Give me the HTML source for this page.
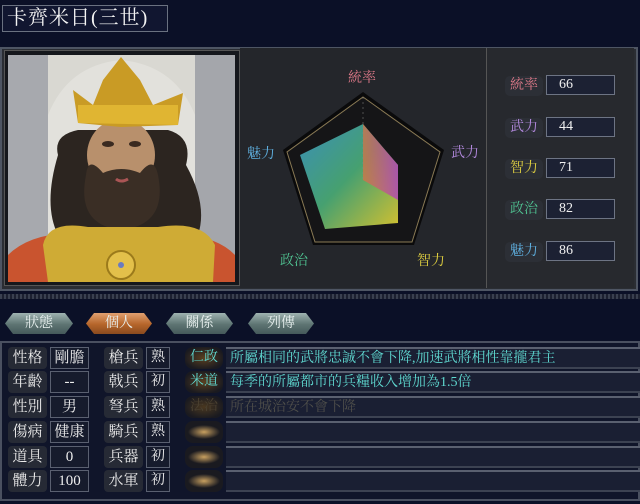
<!DOCTYPE html>
<html><head><meta charset="utf-8"><style>
*{margin:0;padding:0;box-sizing:border-box}
body{width:640px;height:504px;background:#0b1027;font-family:"Liberation Serif","Noto Serif CJK SC",serif;position:relative;overflow:hidden;color:#fff}
.abs{position:absolute}
.title{left:2px;top:5px;width:166px;height:27px;border:1px solid #6a7180;background:#111630;font-size:20px;line-height:25px;padding-left:4px;letter-spacing:1px;color:#f4f4f4}
.panel{border:2px solid #5c6270;background:#232529}
.lab{background:#2c2f36;border-radius:5px;font-size:14px;text-align:center;line-height:20px;height:20px}
.val{background:#1c2133;border:1px solid #6d7484;font-size:14px;line-height:18px;height:20px;color:#f0f0f0}
.tab{top:313px;height:21px;font-size:14px;line-height:21px;text-align:center;color:#e8f0ef;clip-path:polygon(8px 0,calc(100% - 8px) 0,100% 50%,calc(100% - 8px) 100%,8px 100%,0 50%);background:linear-gradient(#9fb3b1,#5d7472 55%,#45595a)}
.r{height:22px}
.bl{background:#262a35;border-radius:4px;font-size:15px;text-align:center;line-height:22px;color:#eaeaea}
.bv{background:#161b2c;border:1px solid #5a6070;font-size:15px;text-align:center;line-height:20px;color:#eee}
.sk{font-size:14px;text-align:center;line-height:22px;border-radius:8px}
.desc{background:#1a1f33;border-top:2px solid #5a6070;border-bottom:2px solid #3c4252;font-size:14px;line-height:19px;padding-left:4px;color:#5fd8d0}
</style></head><body>
<div class="abs title">卡齊米日(三世)</div>

<div class="abs" style="left:0;top:47px;width:638px;height:244px;background:#2a2d33;border:2px solid #4e5563"></div>
<div class="abs" style="left:4px;top:50px;width:236px;height:236px;background:#15171c;border:1px solid #555"></div>
<svg class="abs" style="left:8px;top:55px" width="227" height="227" viewBox="0 0 227 227">
<rect width="227" height="227" fill="#d9d8d2"/>
<rect x="0" y="0" width="40" height="227" fill="#a7a9ae"/>
<rect x="187" y="0" width="40" height="227" fill="#a4a6ab"/>
<path d="M40 227 V60 Q60 10 113 5 Q167 10 187 60 V227Z" fill="#e2e1dc"/>
<path d="M0 200 Q20 180 60 178 L170 178 Q210 182 227 200 V227 H0Z" fill="#c9542f"/>
<path d="M50 100 Q45 80 70 75 L160 75 Q185 82 178 110 Q200 150 190 180 L50 180 Q35 150 50 100Z" fill="#2c2520"/>
<ellipse cx="113" cy="100" rx="34" ry="36" fill="#b8906c"/>
<path d="M78 120 Q80 100 95 118 Q113 110 132 118 Q146 100 150 120 Q160 170 113 175 Q68 170 78 120Z" fill="#3a2e25"/>
<ellipse cx="100" cy="89" rx="6" ry="3" fill="#3a2a20"/><ellipse cx="127" cy="89" rx="6" ry="3" fill="#3a2a20"/>
<path d="M108 124 Q113 128 120 124" stroke="#a55" stroke-width="3" fill="none"/>
<path d="M65 35 L85 50 L95 25 L113 2 L132 25 L145 50 L175 38 L170 70 L113 72 L70 68Z" fill="#c99b25"/>
<path d="M70 50 L170 50 L170 70 L70 68Z" fill="#e0b532"/>
<path d="M35 190 Q40 165 80 172 L150 172 Q195 165 207 190 L205 227 H40Z" fill="#cfab35"/>
<circle cx="113" cy="210" r="14" fill="#e3c04a" stroke="#9b7a1b" stroke-width="2"/>
<circle cx="113" cy="210" r="3" fill="#6a7bc0"/>
</svg>

<div class="abs" style="left:240px;top:48px;width:246px;height:240px;background:#24262b"></div>
<svg class="abs" style="left:240px;top:48px" width="246" height="240" viewBox="240 48 246 240">
<defs>
<linearGradient id="g1" x1="0" y1="0" x2="1" y2="1"><stop offset="0" stop-color="#3a8fb8"/><stop offset=".5" stop-color="#46a070"/><stop offset="1" stop-color="#d2c030"/></linearGradient>
<linearGradient id="g2" x1="0" y1="0" x2="1" y2="0"><stop offset="0" stop-color="#e07040" stop-opacity=".7"/><stop offset="1" stop-color="#b040c0" stop-opacity=".8"/></linearGradient>
</defs>
<polygon points="363,92 444,150 414,245 313,245 283,150" fill="#0a0a0b"/>
<polygon points="363,97 440,152 412,242 315,242 287,152" fill="#151517" stroke="#8a7a55" stroke-width="1"/>
<polygon points="363,124 398,165 398,223 325,229 300,155" fill="url(#g1)"/>
<polygon points="363,124 398,165 398,200 363,180" fill="url(#g2)"/>
<line x1="363" y1="97" x2="363" y2="180" stroke="#888" stroke-width=".5" stroke-dasharray="2,3"/>
</svg>
<div class="abs" style="left:348px;top:67px;font-size:14px;color:#e07a8a">統率</div>
<div class="abs" style="left:451px;top:142px;font-size:14px;color:#b48ae0">武力</div>
<div class="abs" style="left:417px;top:250px;font-size:14px;color:#e0d040">智力</div>
<div class="abs" style="left:280px;top:250px;font-size:14px;color:#4fc090">政治</div>
<div class="abs" style="left:247px;top:143px;font-size:14px;color:#5fb0e0">魅力</div>

<div class="abs" style="left:486px;top:48px;width:148px;height:240px;background:#27292e;border-left:1px solid #555"></div>
<div class="abs lab" style="left:505px;top:76px;width:38px;color:#e07a8a">統率</div><div class="abs val" style="left:546px;top:75px;width:69px;padding-left:12px">66</div>
<div class="abs lab" style="left:505px;top:118px;width:38px;color:#b48ae0">武力</div><div class="abs val" style="left:546px;top:117px;width:69px;padding-left:12px">44</div>
<div class="abs lab" style="left:505px;top:159px;width:38px;color:#e0d040">智力</div><div class="abs val" style="left:546px;top:158px;width:69px;padding-left:12px">71</div>
<div class="abs lab" style="left:505px;top:200px;width:38px;color:#4fc090">政治</div><div class="abs val" style="left:546px;top:199px;width:69px;padding-left:12px">82</div>
<div class="abs lab" style="left:505px;top:242px;width:38px;color:#5fb0e0">魅力</div><div class="abs val" style="left:546px;top:241px;width:69px;padding-left:12px">86</div>

<div class="abs" style="left:0;top:294px;width:640px;height:5px;background:repeating-linear-gradient(90deg,#3a4050 0 2px,#1c2030 2px 4px)"></div>

<div class="abs tab" style="left:5px;width:68px">狀態</div>
<div class="abs tab" style="left:86px;width:66px;background:linear-gradient(#e0a070,#b5652a 55%,#8a4a1f)">個人</div>
<div class="abs tab" style="left:166px;width:67px">關係</div>
<div class="abs tab" style="left:248px;width:66px">列傳</div>

<div class="abs" style="left:0;top:341px;width:640px;height:160px;border:2px solid #4a5060;background:#10152a"></div>

<div class="abs bl r" style="left:8px;top:347px;width:39px">性格</div><div class="abs bv r" style="left:50px;top:347px;width:39px">剛膽</div>
<div class="abs bl r" style="left:8px;top:371px;width:39px">年齡</div><div class="abs bv r" style="left:50px;top:371px;width:39px">--</div>
<div class="abs bl r" style="left:8px;top:396px;width:39px">性別</div><div class="abs bv r" style="left:50px;top:396px;width:39px">男</div>
<div class="abs bl r" style="left:8px;top:421px;width:39px">傷病</div><div class="abs bv r" style="left:50px;top:421px;width:39px">健康</div>
<div class="abs bl r" style="left:8px;top:446px;width:39px">道具</div><div class="abs bv r" style="left:50px;top:446px;width:39px">0</div>
<div class="abs bl r" style="left:8px;top:470px;width:39px">體力</div><div class="abs bv r" style="left:50px;top:470px;width:39px">100</div>

<div class="abs bl r" style="left:104px;top:347px;width:39px">槍兵</div><div class="abs bv r" style="left:146px;top:347px;width:24px;font-size:14px">熟</div>
<div class="abs bl r" style="left:104px;top:371px;width:39px">戟兵</div><div class="abs bv r" style="left:146px;top:371px;width:24px;font-size:14px">初</div>
<div class="abs bl r" style="left:104px;top:396px;width:39px">弩兵</div><div class="abs bv r" style="left:146px;top:396px;width:24px;font-size:14px">熟</div>
<div class="abs bl r" style="left:104px;top:421px;width:39px">騎兵</div><div class="abs bv r" style="left:146px;top:421px;width:24px;font-size:14px">熟</div>
<div class="abs bl r" style="left:104px;top:446px;width:39px">兵器</div><div class="abs bv r" style="left:146px;top:446px;width:24px;font-size:14px">初</div>
<div class="abs bl r" style="left:104px;top:470px;width:39px">水軍</div><div class="abs bv r" style="left:146px;top:470px;width:24px;font-size:14px">初</div>

<div class="abs sk r" style="left:185px;top:347px;width:38px;color:#5fd8d0;background:radial-gradient(#5a4020,#1a1a20 75%)">仁政</div>
<div class="abs sk r" style="left:185px;top:371px;width:38px;color:#5fd8d0;background:radial-gradient(#5a4020,#1a1a20 75%)">米道</div>
<div class="abs sk r" style="left:185px;top:396px;width:38px;color:#4a4030;background:radial-gradient(#4a3820,#1a1a20 75%)">法治</div>
<div class="abs sk r" style="left:185px;top:421px;width:38px;background:radial-gradient(ellipse 16px 7px,#c8a060,#1a1a20)"></div>
<div class="abs sk r" style="left:185px;top:446px;width:38px;background:radial-gradient(ellipse 16px 7px,#c8a060,#1a1a20)"></div>
<div class="abs sk r" style="left:185px;top:470px;width:38px;background:radial-gradient(ellipse 16px 7px,#c8a060,#1a1a20)"></div>

<div class="abs desc r" style="left:226px;top:347px;width:414px">所屬相同的武將忠誠不會下降,加速武將相性靠攏君主</div>
<div class="abs desc r" style="left:226px;top:371px;width:414px">每季的所屬都市的兵糧收入增加為1.5倍</div>
<div class="abs desc r" style="left:226px;top:396px;width:414px;color:#4e4e4a">所在城治安不會下降</div>
<div class="abs desc r" style="left:226px;top:421px;width:414px"></div>
<div class="abs desc r" style="left:226px;top:446px;width:414px"></div>
<div class="abs desc r" style="left:226px;top:470px;width:414px"></div>
</body></html>
